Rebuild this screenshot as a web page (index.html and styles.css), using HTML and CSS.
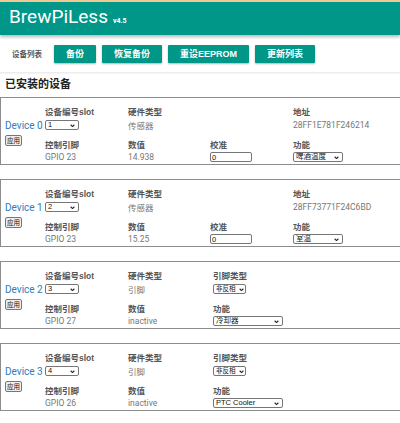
FILE: index.html
```html
<!DOCTYPE html>
<html lang="zh">
<head>
<meta charset="utf-8">
<title>BrewPiLess</title>
<link rel="stylesheet" href="styles.css">
</head>
<body>
<header class="topbar"><span class="brand">BrewPiLess</span><span class="ver">v4.5</span></header>
<nav class="toolbar">
  <span class="tb-label">设备列表</span>
  <button class="btn">备份</button>
  <button class="btn">恢复备份</button>
  <button class="btn">重设EEPROM</button>
  <button class="btn">更新列表</button>
</nav>
<main class="content">
  <h2 class="section-title">已安装的设备</h2>

  <div class="device">
    <div class="dev-id"><span class="dev-name">Device 0</span><button class="apply">应用</button></div>
    <div class="dev-grid">
      <div class="row r1">
        <div class="cell"><div class="lbl">设备编号slot</div><div class="val"><span class="sel w-slot"><select><option>1</option></select><svg class="chev" viewBox="0 0 6 4"><path d="M0.8 0.8 L3 3 L5.2 0.8"/></svg></span></div></div>
        <div class="cell"><div class="lbl">硬件类型</div><div class="val">传感器</div></div>
        <div class="cell"></div>
        <div class="cell"><div class="lbl">地址</div><div class="val">28FF1E781F246214</div></div>
      </div>
      <div class="row r2">
        <div class="cell"><div class="lbl">控制引脚</div><div class="val">GPIO 23</div></div>
        <div class="cell"><div class="lbl">数值</div><div class="val">14.938</div></div>
        <div class="cell"><div class="lbl">校准</div><div class="val"><input class="txt" type="text" value="0"></div></div>
        <div class="cell"><div class="lbl">功能</div><div class="val"><span class="sel w-func"><select><option>啤酒温度</option></select><svg class="chev" viewBox="0 0 6 4"><path d="M0.8 0.8 L3 3 L5.2 0.8"/></svg></span></div></div>
      </div>
    </div>
  </div>

  <div class="device">
    <div class="dev-id"><span class="dev-name">Device 1</span><button class="apply">应用</button></div>
    <div class="dev-grid">
      <div class="row r1">
        <div class="cell"><div class="lbl">设备编号slot</div><div class="val"><span class="sel w-slot"><select><option>2</option></select><svg class="chev" viewBox="0 0 6 4"><path d="M0.8 0.8 L3 3 L5.2 0.8"/></svg></span></div></div>
        <div class="cell"><div class="lbl">硬件类型</div><div class="val">传感器</div></div>
        <div class="cell"></div>
        <div class="cell"><div class="lbl">地址</div><div class="val">28FF73771F24C6BD</div></div>
      </div>
      <div class="row r2">
        <div class="cell"><div class="lbl">控制引脚</div><div class="val">GPIO 23</div></div>
        <div class="cell"><div class="lbl">数值</div><div class="val">15.25</div></div>
        <div class="cell"><div class="lbl">校准</div><div class="val"><input class="txt" type="text" value="0"></div></div>
        <div class="cell"><div class="lbl">功能</div><div class="val"><span class="sel w-func"><select><option>室温</option></select><svg class="chev" viewBox="0 0 6 4"><path d="M0.8 0.8 L3 3 L5.2 0.8"/></svg></span></div></div>
      </div>
    </div>
  </div>

  <div class="device pin">
    <div class="dev-id"><span class="dev-name">Device 2</span><button class="apply">应用</button></div>
    <div class="dev-grid">
      <div class="row r1">
        <div class="cell"><div class="lbl">设备编号slot</div><div class="val"><span class="sel w-slot"><select><option>3</option></select><svg class="chev" viewBox="0 0 6 4"><path d="M0.8 0.8 L3 3 L5.2 0.8"/></svg></span></div></div>
        <div class="cell"><div class="lbl">硬件类型</div><div class="val">引脚</div></div>
        <div class="cell"><div class="lbl">引脚类型</div><div class="val"><span class="sel w-inv"><select><option>非反相</option></select><svg class="chev" viewBox="0 0 6 4"><path d="M0.8 0.8 L3 3 L5.2 0.8"/></svg></span></div></div>
      </div>
      <div class="row r2">
        <div class="cell"><div class="lbl">控制引脚</div><div class="val">GPIO 27</div></div>
        <div class="cell"><div class="lbl">数值</div><div class="val">inactive</div></div>
        <div class="cell"><div class="lbl">功能</div><div class="val"><span class="sel w-pfunc"><select><option>冷却器</option></select><svg class="chev" viewBox="0 0 6 4"><path d="M0.8 0.8 L3 3 L5.2 0.8"/></svg></span></div></div>
      </div>
    </div>
  </div>

  <div class="device pin">
    <div class="dev-id"><span class="dev-name">Device 3</span><button class="apply">应用</button></div>
    <div class="dev-grid">
      <div class="row r1">
        <div class="cell"><div class="lbl">设备编号slot</div><div class="val"><span class="sel w-slot"><select><option>4</option></select><svg class="chev" viewBox="0 0 6 4"><path d="M0.8 0.8 L3 3 L5.2 0.8"/></svg></span></div></div>
        <div class="cell"><div class="lbl">硬件类型</div><div class="val">引脚</div></div>
        <div class="cell"><div class="lbl">引脚类型</div><div class="val"><span class="sel w-inv"><select><option>非反相</option></select><svg class="chev" viewBox="0 0 6 4"><path d="M0.8 0.8 L3 3 L5.2 0.8"/></svg></span></div></div>
      </div>
      <div class="row r2">
        <div class="cell"><div class="lbl">控制引脚</div><div class="val">GPIO 26</div></div>
        <div class="cell"><div class="lbl">数值</div><div class="val">inactive</div></div>
        <div class="cell"><div class="lbl">功能</div><div class="val"><span class="sel w-pfunc"><select><option>PTC Cooler</option></select><svg class="chev" viewBox="0 0 6 4"><path d="M0.8 0.8 L3 3 L5.2 0.8"/></svg></span></div></div>
      </div>
    </div>
  </div>
</main>
</body>
</html>
```
FILE: styles.css
```css
html, body {
  margin: 0;
  padding: 0;
}
body {
  width: 400px;
  overflow: hidden;
  background: #fff;
  font-family: "Liberation Sans", "Noto Sans CJK SC", sans-serif;
  color: #333;
}

/* header */
.topbar {
  box-sizing: border-box;
  height: 35px;
  border-top: 2px solid #f0c894;
  background: #009688;
  padding: 3px 9px 0;
  display: flex;
  align-items: baseline;
  box-shadow: 0 2px 3px rgba(0, 0, 0, 0.28);
  position: relative;
  z-index: 1;
}
.brand {
  font-family: Roboto, "Liberation Sans", sans-serif;
  font-size: 19px;
  line-height: 24px;
  color: #fff;
}
.ver {
  font-family: Roboto, "Liberation Sans", sans-serif;
  font-size: 7px;
  font-weight: 700;
  color: #fff;
  margin-left: 5px;
}

/* toolbar */
.toolbar {
  box-sizing: border-box;
  height: 38px;
  display: flex;
  align-items: center;
  gap: 6px;
  padding: 0 12px;
  border-bottom: 1px solid #ececec;
  box-shadow: 0 1px 1px rgba(0, 0, 0, 0.04);
}
.tb-label {
  font-size: 7.5px;
  font-weight: 700;
  color: #555;
  margin-right: 6px;
}
.btn {
  height: 18px;
  padding: 0 12px;
  border: none;
  border-radius: 1px;
  background: #009688;
  color: #fff;
  font-family: "Liberation Sans", "Noto Sans CJK SC", sans-serif;
  font-size: 9px;
  font-weight: 700;
  box-shadow: 0 1px 2px rgba(0, 0, 0, 0.3);
}

/* content */
.content {
  padding: 0;
}
.section-title {
  margin: 4px 0 6px;
  padding-left: 5px;
  font-size: 11px;
  line-height: 14px;
  font-weight: 700;
  color: #222;
}

.device {
  box-sizing: border-box;
  width: 410px;
  border: 1px solid #8c8c8c;
  margin-bottom: 14px;
  padding: 8px 0 1px 4px;
  display: flex;
}
.dev-id {
  width: 40px;
  padding-top: 14px;
  display: flex;
  flex-direction: column;
  align-items: flex-start;
  gap: 3px;
}
.dev-name {
  font-family: Roboto, "Liberation Sans", sans-serif;
  font-size: 10px;
  line-height: 12px;
  color: #337ab7;
  white-space: nowrap;
}
.apply {
  box-sizing: border-box;
  width: 17px;
  height: 11px;
  padding: 0;
  border: 1px solid #767676;
  border-radius: 2px;
  background: #efefef;
  font-family: "Noto Sans CJK SC", sans-serif;
  font-size: 6.5px;
  line-height: 9px;
  color: #111;
}

.dev-grid {
  display: flex;
  flex-direction: column;
  gap: 7px;
}
.row {
  display: grid;
  grid-template-columns: 83px 82px 83px 100px;
}
.pin .row {
  grid-template-columns: 83px 85px 100px;
}
.lbl {
  font-size: 8.5px;
  line-height: 12px;
  font-weight: 700;
  color: #555;
  white-space: nowrap;
}
.val {
  font-family: Roboto, "Liberation Sans", "Noto Sans CJK SC", sans-serif;
  font-size: 8.5px;
  color: #777;
  display: flex;
  align-items: center;
  white-space: nowrap;
}
.r1 .val { height: 14px; }
.r2 .val { height: 12px; }

.sel {
  position: relative;
  display: inline-block;
  height: 10px;
}
.sel select {
  box-sizing: border-box;
  appearance: none;
  -webkit-appearance: none;
  width: 100%;
  height: 10px;
  margin: 0;
  padding: 0 0 0 2px;
  border: 1px solid #767676;
  border-radius: 2px;
  background: #fff;
  font-family: "Liberation Sans", "Noto Sans CJK SC", sans-serif;
  font-size: 7.5px;
  line-height: 8px;
  color: #111;
  display: block;
}
.chev {
  position: absolute;
  right: 4px;
  top: 3.5px;
  width: 5px;
  height: 3.5px;
  fill: none;
  stroke: #222;
  stroke-width: 1.3;
  pointer-events: none;
}
.w-slot { width: 34px; }
.w-func { width: 50px; }
.w-inv { width: 33px; }
.w-inv select { font-size: 6.5px; padding-left: 2px; }
.w-inv .chev { right: 2px; }
.w-pfunc { width: 70px; }

.txt {
  box-sizing: border-box;
  width: 42px;
  height: 10px;
  margin: 0;
  padding: 0 1px;
  border: 1px solid #767676;
  border-radius: 2px;
  font-family: "Liberation Sans", sans-serif;
  font-size: 7.5px;
  color: #111;
}
```
